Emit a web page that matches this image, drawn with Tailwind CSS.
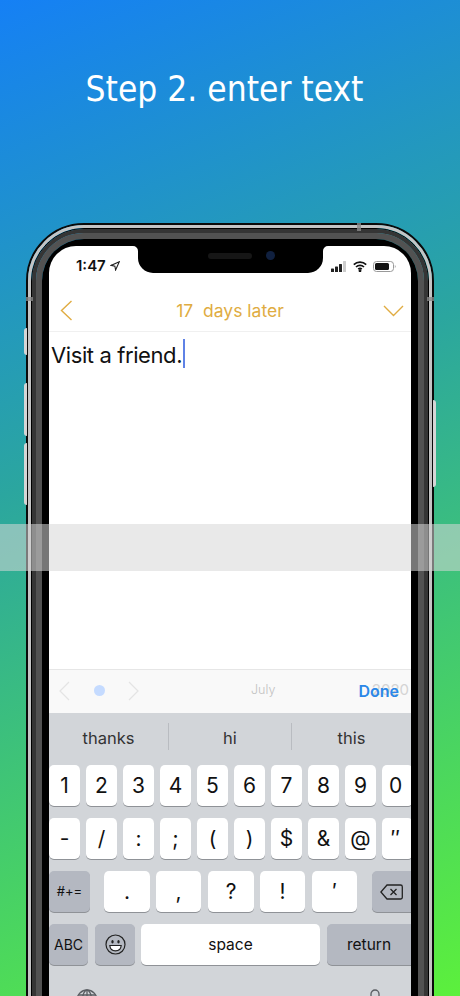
<!DOCTYPE html>
<html lang="en">
<head>
    <meta charset="UTF-8">
    <meta name="viewport" content="width=device-width, initial-scale=1.0">
    <title>Step 2. enter text</title>
    <script src="https://cdn.jsdelivr.net/npm/@tailwindcss/browser@4"></script>
</head>
<body class="m-0">
<div class="relative w-[460px] h-[996px] overflow-hidden bg-[linear-gradient(158deg,#1580f5,#2ba69f_42%,#5cf03c)] font-['Inter',sans-serif]">

    <!-- Title -->
    <div class="h-[223px] pt-[59px] pr-[11px] text-center text-white text-[35px] leading-[60px] font-['DejaVu_Sans_Condensed','DejaVu_Sans',sans-serif]">Step 2. enter text</div>

    <!-- Phone -->
    <div class="relative ml-[26px] w-[408px] h-[900px]">
        <!-- side buttons -->
        <div class="absolute left-[-2px] top-[105px] w-[3px] h-[27px] bg-[#d5d5d5] rounded-l-sm"></div>
        <div class="absolute left-[-2px] top-[160px] w-[3px] h-[53px] bg-[#d5d5d5] rounded-l-sm"></div>
        <div class="absolute left-[-2px] top-[220px] w-[3px] h-[62px] bg-[#d5d5d5] rounded-l-sm"></div>
        <div class="absolute right-[-2px] top-[177px] w-[3px] h-[87px] bg-[#d5d5d5] rounded-r-sm"></div>

        <div class="h-full border-2 border-[#0a0a0a] rounded-[58px]">
            <div class="h-full border-[3px] border-[#c4c4c4] rounded-[56px]">
                <div class="h-full border border-black rounded-[53px]">
                    <div class="h-full border-4 border-[#353535] rounded-[52px]">
                        <div class="h-full border-[6px] border-[#525252] rounded-[48px]">
                            <div class="h-full bg-black rounded-[42px] p-[7px]">

                                <!-- Screen -->
                                <div class="relative h-full bg-white rounded-t-[27px] overflow-hidden flex flex-col">

                                    <!-- Status bar -->
                                    <div class="h-[36px] shrink-0 flex items-start justify-between pt-[11px] pl-[27px] pr-[15px]">
                                        <div class="flex items-center gap-[4px] h-[18px]">
                                            <span class="text-[15px] font-semibold text-[#111]">1:47</span>
                                            <svg width="10" height="10" viewBox="0 0 10 10" fill="none" stroke="#222" stroke-width="1.1"><path d="M9.3.7 1 4.4l3.9.7.7 3.9z"/></svg>
                                        </div>
                                        <div class="flex items-center gap-[6px] h-[18px]">
                                            <svg width="16" height="11" viewBox="0 0 16 11"><rect x="0" y="7.500" width="3" height="3.500" rx=".6" fill="#222"/><rect x="4" y="5.500" width="3" height="5.500" rx=".6" fill="#222"/><rect x="8" y="3" width="3" height="8" rx=".6" fill="#222"/><rect x="12" y="0" width="3" height="11" rx=".6" fill="#ccc"/></svg>
                                            <svg width="14" height="11" viewBox="0 0 14 11" fill="none" stroke="#111" stroke-width="1.7"><path d="M.8 3.6a9 9 0 0 1 12.4 0"/><path d="M3 6a5.8 5.8 0 0 1 8 0"/><path d="M5.2 8.2a2.6 2.6 0 0 1 3.6 0"/><circle cx="7" cy="9.7" r=".6" fill="#111"/></svg>
                                            <svg width="23" height="11" viewBox="0 0 23 11" fill="none"><rect x=".5" y=".5" width="20" height="10" rx="3" stroke="#999"/><rect x="2" y="2" width="14" height="7" rx="1.5" fill="#111"/><path d="M21.8 4v3c.7-.3 1-.9 1-1.500s-.3-1.200-1-1.500z" fill="#aaa"/></svg>
                                        </div>
                                    </div>

                                    <!-- Nav -->
                                    <div class="h-[50px] shrink-0 border-b border-[#f0f0f0] flex items-center justify-between pt-[8px] pl-[11px] pr-[7px]">
                                        <svg width="13" height="21" viewBox="0 0 13 21" fill="none" stroke="#e0ac42" stroke-width="1.4"><path d="M11.500 1 1.500 10.500l10 9.500"/></svg>
                                        <div class="ml-[4px] mt-[1px] text-[17.500px] text-[#e0ac42] whitespace-pre">17  days later</div>
                                        <svg width="21" height="12" viewBox="0 0 21 12" fill="none" stroke="#e0ac42" stroke-width="1.4"><path d="M1 1l9.500 9.500L20 1"/></svg>
                                    </div>

                                    <!-- Text area -->
                                    <div class="h-[337px] shrink-0 pl-[2px] pt-[7px] flex items-start">
                                        <span class="text-[22px] leading-[32px] tracking-[-0.4px] text-[#111]">Visit a friend.</span>
                                        <span class="w-[2px] h-[29px] bg-[#5f82e6] ml-[1px]"></span>
                                    </div>

                                    <!-- Toolbar -->
                                    <div class="relative h-[44px] shrink-0 bg-[#f9f9f9] border-t border-[#e6e6e6] flex items-center pb-[2px]">
                                        <svg class="ml-[10px]" width="11" height="20" viewBox="0 0 11 20" fill="none" stroke="#e4e4e4" stroke-width="1.200"><path d="M10 1 1 10l9 9"/></svg>
                                        <div class="ml-[24px] w-[11px] h-[11px] rounded-full bg-[#c5dbff]"></div>
                                        <svg class="ml-[23px]" width="11" height="20" viewBox="0 0 11 20" fill="none" stroke="#e4e4e4" stroke-width="1.200"><path d="M1 1l9 9-9 9"/></svg>
                                        <div class="ml-[112px] text-[12.500px] font-light text-[#c2c2c2]">July</div>
                                        <div class="ml-auto mr-[2px] text-[15px] text-[#d4d4d4]">2020</div>
                                        <div class="absolute right-[12px] top-[11px] text-[16px] leading-[20px] font-semibold text-[#2b87e8]">Done</div>
                                    </div>

                                    <!-- Keyboard -->
                                    <div class="flex-1 bg-[#d2d5d9] text-[#111]">
                                        <!-- Suggestions -->
                                        <div class="h-[52px] flex pt-[10px] text-[16.500px] text-[#333]">
                                            <div class="w-[120px] h-[27px] pt-[3px] border-r border-[#b9bcc1] flex items-center justify-center">thanks</div>
                                            <div class="w-[123px] h-[27px] pt-[3px] border-r border-[#b9bcc1] flex items-center justify-center">hi</div>
                                            <div class="w-[119px] h-[27px] pt-[3px] flex items-center justify-center">this</div>
                                        </div>

                                        <div class="flex flex-col gap-[12px]">
                                            <!-- Digits -->
                                            <div class="flex gap-[6px] text-[21px]">
                                                <div class="shrink-0 w-[31px] h-[41px] bg-white rounded-[5px] shadow-[0_1px_0_#8f9297] flex items-center justify-center">1</div>
                                                <div class="shrink-0 w-[31px] h-[41px] bg-white rounded-[5px] shadow-[0_1px_0_#8f9297] flex items-center justify-center">2</div>
                                                <div class="shrink-0 w-[31px] h-[41px] bg-white rounded-[5px] shadow-[0_1px_0_#8f9297] flex items-center justify-center">3</div>
                                                <div class="shrink-0 w-[31px] h-[41px] bg-white rounded-[5px] shadow-[0_1px_0_#8f9297] flex items-center justify-center">4</div>
                                                <div class="shrink-0 w-[31px] h-[41px] bg-white rounded-[5px] shadow-[0_1px_0_#8f9297] flex items-center justify-center">5</div>
                                                <div class="shrink-0 w-[31px] h-[41px] bg-white rounded-[5px] shadow-[0_1px_0_#8f9297] flex items-center justify-center">6</div>
                                                <div class="shrink-0 w-[31px] h-[41px] bg-white rounded-[5px] shadow-[0_1px_0_#8f9297] flex items-center justify-center">7</div>
                                                <div class="shrink-0 w-[31px] h-[41px] bg-white rounded-[5px] shadow-[0_1px_0_#8f9297] flex items-center justify-center">8</div>
                                                <div class="shrink-0 w-[31px] h-[41px] bg-white rounded-[5px] shadow-[0_1px_0_#8f9297] flex items-center justify-center">9</div>
                                                <div class="shrink-0 w-[31px] h-[41px] bg-white rounded-[5px] shadow-[0_1px_0_#8f9297] flex items-center justify-center pr-[4px]">0</div>
                                            </div>
                                            <!-- Symbols -->
                                            <div class="flex gap-[6px] text-[21px]">
                                                <div class="shrink-0 w-[31px] h-[41px] bg-white rounded-[5px] shadow-[0_1px_0_#8f9297] flex items-center justify-center">-</div>
                                                <div class="shrink-0 w-[31px] h-[41px] bg-white rounded-[5px] shadow-[0_1px_0_#8f9297] flex items-center justify-center">/</div>
                                                <div class="shrink-0 w-[31px] h-[41px] bg-white rounded-[5px] shadow-[0_1px_0_#8f9297] flex items-center justify-center">:</div>
                                                <div class="shrink-0 w-[31px] h-[41px] bg-white rounded-[5px] shadow-[0_1px_0_#8f9297] flex items-center justify-center">;</div>
                                                <div class="shrink-0 w-[31px] h-[41px] bg-white rounded-[5px] shadow-[0_1px_0_#8f9297] flex items-center justify-center">(</div>
                                                <div class="shrink-0 w-[31px] h-[41px] bg-white rounded-[5px] shadow-[0_1px_0_#8f9297] flex items-center justify-center">)</div>
                                                <div class="shrink-0 w-[31px] h-[41px] bg-white rounded-[5px] shadow-[0_1px_0_#8f9297] flex items-center justify-center">$</div>
                                                <div class="shrink-0 w-[31px] h-[41px] bg-white rounded-[5px] shadow-[0_1px_0_#8f9297] flex items-center justify-center">&amp;</div>
                                                <div class="shrink-0 w-[31px] h-[41px] bg-white rounded-[5px] shadow-[0_1px_0_#8f9297] flex items-center justify-center">@</div>
                                                <div class="shrink-0 w-[31px] h-[41px] bg-white rounded-[5px] shadow-[0_1px_0_#8f9297] flex items-center justify-center pr-[4px]">″</div>
                                            </div>
                                            <!-- Punctuation -->
                                            <div class="flex text-[21px]">
                                                <div class="shrink-0 w-[41px] h-[41px] bg-[#b4b8c1] rounded-[5px] shadow-[0_1px_0_#8f9297] flex items-center justify-center text-[13px]">#+=</div>
                                                <div class="shrink-0 ml-[14px] w-[46px] h-[41px] bg-white rounded-[5px] shadow-[0_1px_0_#8f9297] flex items-center justify-center">.</div>
                                                <div class="shrink-0 ml-[6px] w-[45px] h-[41px] bg-white rounded-[5px] shadow-[0_1px_0_#8f9297] flex items-center justify-center">,</div>
                                                <div class="shrink-0 ml-[7px] w-[46px] h-[41px] bg-white rounded-[5px] shadow-[0_1px_0_#8f9297] flex items-center justify-center">?</div>
                                                <div class="shrink-0 ml-[6px] w-[45px] h-[41px] bg-white rounded-[5px] shadow-[0_1px_0_#8f9297] flex items-center justify-center">!</div>
                                                <div class="shrink-0 ml-[7px] w-[45px] h-[41px] bg-white rounded-[5px] shadow-[0_1px_0_#8f9297] flex items-center justify-center">′</div>
                                                <div class="shrink-0 ml-[15px] w-[39px] h-[41px] bg-[#b4b8c1] rounded-l-[5px] shadow-[0_1px_0_#8f9297] flex items-center justify-center">
                                                    <svg width="23" height="16" viewBox="0 0 23 16" fill="none" stroke="#222" stroke-width="1.300"><path d="M7 1h13.500a1.800 1.800 0 0 1 1.800 1.800v10.400a1.800 1.800 0 0 1-1.800 1.800H7L.9 8z"/><path d="M10.500 5l6 6M16.500 5l-6 6"/></svg>
                                                </div>
                                            </div>
                                            <!-- Bottom row -->
                                            <div class="flex">
                                                <div class="shrink-0 w-[39px] h-[41px] bg-[#b4b8c1] rounded-[5px] shadow-[0_1px_0_#8f9297] flex items-center justify-center text-[14px]">ABC</div>
                                                <div class="shrink-0 ml-[7px] w-[40px] h-[41px] bg-[#b4b8c1] rounded-[5px] shadow-[0_1px_0_#8f9297] flex items-center justify-center">
                                                    <svg width="21" height="21" viewBox="0 0 21 21" fill="none" stroke="#222" stroke-width="1.200"><circle cx="10.500" cy="10.500" r="9.500"/><ellipse cx="7.500" cy="7.800" rx="1.200" ry="1.700" fill="#222" stroke="none"/><ellipse cx="13.500" cy="7.800" rx="1.200" ry="1.700" fill="#222" stroke="none"/><path d="M4.800 11.500h11.400c-.3 3.400-2.800 5.300-5.700 5.300s-5.400-1.900-5.700-5.300z" fill="#fff"/></svg>
                                                </div>
                                                <div class="shrink-0 ml-[6px] w-[179px] h-[41px] bg-white rounded-[5px] shadow-[0_1px_0_#8f9297] flex items-center justify-center text-[15.500px]">space</div>
                                                <div class="shrink-0 ml-[7px] w-[84px] h-[41px] bg-[#b4b8c1] rounded-l-[5px] shadow-[0_1px_0_#8f9297] flex items-center justify-center text-[15.500px]">return</div>
                                            </div>
                                        </div>

                                        <!-- Globe and mic -->
                                        <div class="flex justify-between mt-[24px] pl-[27px] pr-[29px]">
                                            <svg width="22" height="22" viewBox="0 0 22 22" fill="none" stroke="#5a5d62" stroke-width="1.300"><circle cx="11" cy="11" r="10"/><ellipse cx="11" cy="11" rx="4.500" ry="10"/><path d="M11 1v20M1 11h20M2.500 6h17M2.500 16h17"/></svg>
                                            <svg width="14" height="24" viewBox="0 0 14 24" fill="none" stroke="#5a5d62" stroke-width="1.300"><rect x="3" y="1" width="8" height="14" rx="4"/><path d="M1 11v1a6 6 0 0 0 12 0v-1M7 18v5"/></svg>
                                        </div>
                                    </div>

                                    <!-- Notch -->
                                    <div class="absolute top-0 left-[89px] w-[185px] h-[27px] bg-black rounded-b-[15px]">
                                        <svg class="absolute top-0 left-[-5px]" width="5" height="5" viewBox="0 0 5 5"><path d="M0 0h5v5a5 5 0 0 0-5-5z" fill="#000"/></svg>
                                        <svg class="absolute top-0 right-[-5px]" width="5" height="5" viewBox="0 0 5 5"><path d="M5 0H0v5a5 5 0 0 1 5-5z" fill="#000"/></svg>
                                        <div class="absolute left-[70px] top-[7px] w-[44px] h-[6px] rounded-full bg-[#161616]"></div>
                                        <div class="absolute left-[128px] top-[5px] w-[9px] h-[9px] rounded-full bg-[#10203f]"></div>
                                    </div>
                                </div>

                            </div>
                        </div>
                    </div>
                </div>
            </div>
        </div>

        <!-- Antenna marks -->
        <div class="absolute top-0 left-[331px] w-[4px] h-[8px] bg-[#8a8a8a]/80"></div>
        <div class="absolute top-[74px] left-0 w-[7px] h-[4px] bg-[#8a8a8a]/80"></div>
        <div class="absolute top-[74px] right-0 w-[7px] h-[4px] bg-[#8a8a8a]/80"></div>
    </div>

    <!-- Translucent band over the whole page -->
    <div class="absolute left-0 top-[524px] w-full h-[47px] bg-[#d7d7d7]/55"></div>
</div>
</body>
</html>
